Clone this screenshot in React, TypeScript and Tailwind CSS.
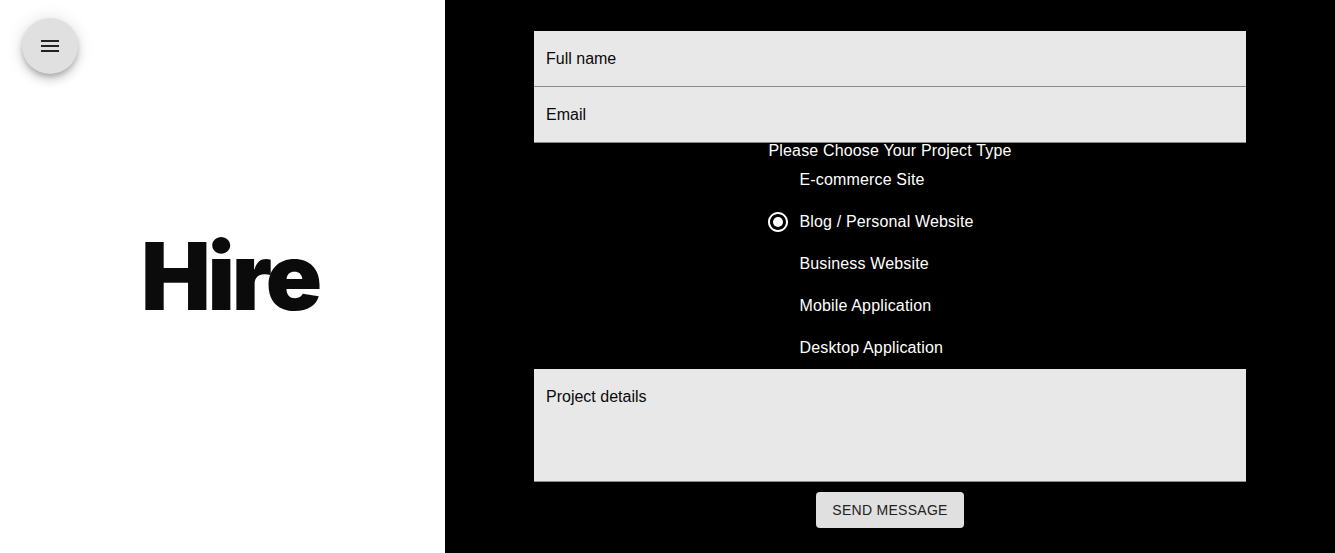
import React, { useState } from 'react';

const options = [
  "E-commerce Site",
  "Blog / Personal Website",
  "Business Website",
  "Mobile Application",
  "Desktop Application",
];

export default function App() {
  const [choice, setChoice] = useState("Blog / Personal Website");

  return (
    <div className="flex h-[553px] w-full font-['Liberation_Sans',Arial,sans-serif]">
      {/* left side */}
      <div className="relative flex w-[445px] shrink-0 items-center justify-center bg-white">
        <button className="absolute left-[22px] top-[18px] flex h-[56px] w-[56px] items-center justify-center rounded-full bg-[#e0e0e0] shadow-[0_3px_5px_-1px_rgba(0,0,0,0.2),0_6px_10px_0_rgba(0,0,0,0.14),0_1px_18px_0_rgba(0,0,0,0.12)]">
          <svg width="24" height="24" viewBox="0 0 24 24" fill="#222">
            <path d="M3 18h18v-2H3v2zm0-5h18v-2H3v2zm0-7v2h18V6H3z" />
          </svg>
        </button>
        <h1 className="ml-[15px] font-['Inter',sans-serif] text-[93px] font-black leading-none tracking-[-0.035em] text-[#0b0b0b]">
          Hire
        </h1>
      </div>

      {/* right side */}
      <div className="flex flex-1 justify-center bg-black pt-[31px]">
        <form className="flex w-[712px] flex-col items-center" onSubmit={(e) => e.preventDefault()}>
          <div className="flex h-[56px] w-full items-center border-b border-[#8a8a8a] bg-[#e8e8e8] px-[12px] text-[16px] text-[#0a0a0a]">
            Full name
          </div>
          <div className="flex h-[56px] w-full items-center border-b border-[#8a8a8a] bg-[#e8e8e8] px-[12px] text-[16px] text-[#0a0a0a]">
            Email
          </div>

          <div className="flex flex-col">
            <div className="text-[16px] leading-[16px] tracking-[0.01em] text-white">Please Choose Your Project Type</div>
            <div className="flex flex-col">
              {options.map((o) => (
                <label key={o} className="-ml-[11px] flex h-[42px] cursor-pointer items-center text-[16px] tracking-[0.01em] text-white" onClick={() => setChoice(o)}>
                  <span className="flex h-[42px] w-[42px] items-center justify-center">
                    <svg width="24" height="24" viewBox="0 0 24 24" fill={choice === o ? "#fff" : "#000"}>
                      <path d="M12 2C6.48 2 2 6.48 2 12s4.48 10 10 10 10-4.48 10-10S17.52 2 12 2zm0 18c-4.42 0-8-3.58-8-8s3.58-8 8-8 8 3.58 8 8-3.58 8-8 8z" />
                      {choice === o && <circle cx="12" cy="12" r="5" />}
                    </svg>
                  </span>
                  {o}
                </label>
              ))}
            </div>
          </div>

          <div className="h-[113px] w-full border-b border-[#8a8a8a] bg-[#e8e8e8] px-[12px] pt-[16px] text-[16px] text-[#0a0a0a]">
            Project details
          </div>

          <button type="submit" className="mt-[10px] h-[36px] rounded-[4px] bg-[#e0e0e0] px-[16px] text-[14px] tracking-[0.02em] text-[#222]">
            SEND MESSAGE
          </button>
        </form>
      </div>
    </div>
  );
}
